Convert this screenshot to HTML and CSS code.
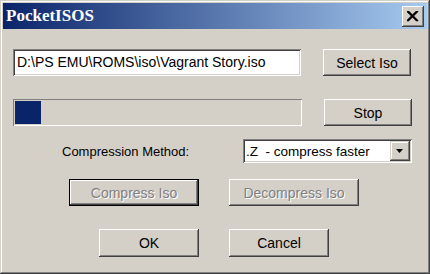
FILE: index.html
```html
<!DOCTYPE html>
<html>
<head>
  <title>PocketISOS</title>
  <link rel="stylesheet" href="styles.css">
</head>
<body>
  <div class="window">
    <div class="titlebar">
      <span class="title">PocketISOS</span>
      <div class="close">
        <svg width="12" height="11" viewBox="0 0 12 11">
          <path d="M1 0 L11 10 M0 0 L10 10 M10 0 L0 10 M11 0 L1 10" stroke="#000" stroke-width="1.6"/>
        </svg>
      </div>
    </div>

    <div class="content">
      <div class="row row-path">
        <div class="field">D:\PS EMU\ROMS\iso\Vagrant Story.iso</div>
        <div class="btn side">Select Iso</div>
      </div>

      <div class="row row-progress">
        <div class="progress"><div class="chunk"></div></div>
        <div class="btn side">Stop</div>
      </div>

      <div class="row row-method">
        <div class="label">Compression Method:</div>
        <div class="combo">
          <span class="combo-text">.Z&nbsp; - compress faster</span>
          <div class="combo-arrow">
            <svg width="8" height="4" viewBox="0 0 8 4"><path d="M0 0 H7 L3.5 4 Z" fill="#000"/></svg>
          </div>
        </div>
      </div>

      <div class="row row-actions">
        <div class="btn wide default disabled">Compress Iso</div>
        <div class="btn wide disabled">Decompress Iso</div>
      </div>

      <div class="row row-dialog">
        <div class="btn small">OK</div>
        <div class="btn small">Cancel</div>
      </div>
    </div>
  </div>
</body>
</html>
```

FILE: styles.css
```css
body {
  margin: 0;
  background-color: #d4d0c8;
  font-family: Arial, "Liberation Sans", sans-serif;
  font-size: 14px;
}

.window {
  width: 430px;
  height: 274px;
  box-sizing: border-box;
  background-color: #d4d0c8;
  padding: 3px;
  box-shadow: inset -1px -1px #404040, inset 1px 1px #d4d0c8,
    inset -2px -2px #808080, inset 2px 2px #ffffff;
}

.titlebar {
  height: 26px;
  display: flex;
  align-items: center;
  justify-content: space-between;
  padding: 0 3px 0 3px;
  background: linear-gradient(to right, #0a246a, #a6caf0);
}

.title {
  color: #ffffff;
  font-family: "Liberation Serif", serif;
  font-weight: bold;
  font-size: 17px;
}

.close {
  width: 22px;
  height: 21px;
  box-sizing: border-box;
  background-color: #d4d0c8;
  display: flex;
  align-items: center;
  justify-content: center;
  box-shadow: inset -1px -1px #404040, inset 1px 1px #ffffff,
    inset -2px -2px #808080;
}

.content {
  padding: 20px 0 0 10px;
}

.row {
  display: flex;
  align-items: center;
}

.row-progress {
  margin-top: 23px;
}

.row-method {
  margin-top: 13px;
}

.row-actions {
  margin-top: 16px;
  padding-left: 56px;
  gap: 30px;
}

.row-dialog {
  margin-top: 23px;
  padding-left: 86px;
  gap: 30px;
}

.field {
  width: 288px;
  height: 27px;
  box-sizing: border-box;
  background-color: #ffffff;
  padding: 3px 0 0 4px;
  line-height: 20px;
  white-space: nowrap;
  box-shadow: inset 1px 1px #808080, inset -1px -1px #ffffff,
    inset 2px 2px #404040, inset -2px -2px #d4d0c8;
}

.btn {
  height: 27px;
  box-sizing: border-box;
  display: flex;
  align-items: center;
  justify-content: center;
  color: #000000;
  background-color: #d4d0c8;
  box-shadow: inset -1px -1px #404040, inset 1px 1px #ffffff,
    inset -2px -2px #808080, inset 2px 2px #d4d0c8;
  user-select: none;
}

.side {
  width: 88px;
  margin-left: 22px;
}

.wide {
  width: 130px;
}

.small {
  width: 100px;
  height: 28px;
}

.default {
  box-shadow: inset 0 0 0 1px #000000, inset -2px -2px #404040,
    inset 2px 2px #ffffff, inset -3px -3px #808080;
}

.disabled {
  color: #808080;
  text-shadow: 1px 1px #ffffff;
}

.progress {
  width: 289px;
  height: 27px;
  box-sizing: border-box;
  padding: 2px;
  box-shadow: inset 1px 1px #808080, inset -1px -1px #ffffff;
}

.chunk {
  width: 26px;
  height: 23px;
  background-color: #0a246a;
}

.label {
  width: 230px;
  padding-left: 49px;
  box-sizing: border-box;
  flex-shrink: 0;
  white-space: nowrap;
  margin-top: 1px;
  font-size: 13px;
}

.combo {
  width: 169px;
  height: 24px;
  box-sizing: border-box;
  background-color: #ffffff;
  display: flex;
  align-items: center;
  justify-content: space-between;
  padding: 2px;
  box-shadow: inset 1px 1px #808080, inset -1px -1px #ffffff,
    inset 2px 2px #404040, inset -2px -2px #d4d0c8;
}

.combo-text {
  padding-left: 1px;
  white-space: nowrap;
  font-size: 13.5px;
}

.combo-arrow {
  width: 20px;
  height: 20px;
  box-sizing: border-box;
  background-color: #d4d0c8;
  display: flex;
  align-items: center;
  justify-content: center;
  box-shadow: inset -1px -1px #404040, inset 1px 1px #d4d0c8,
    inset -2px -2px #808080, inset 2px 2px #ffffff;
}
```
